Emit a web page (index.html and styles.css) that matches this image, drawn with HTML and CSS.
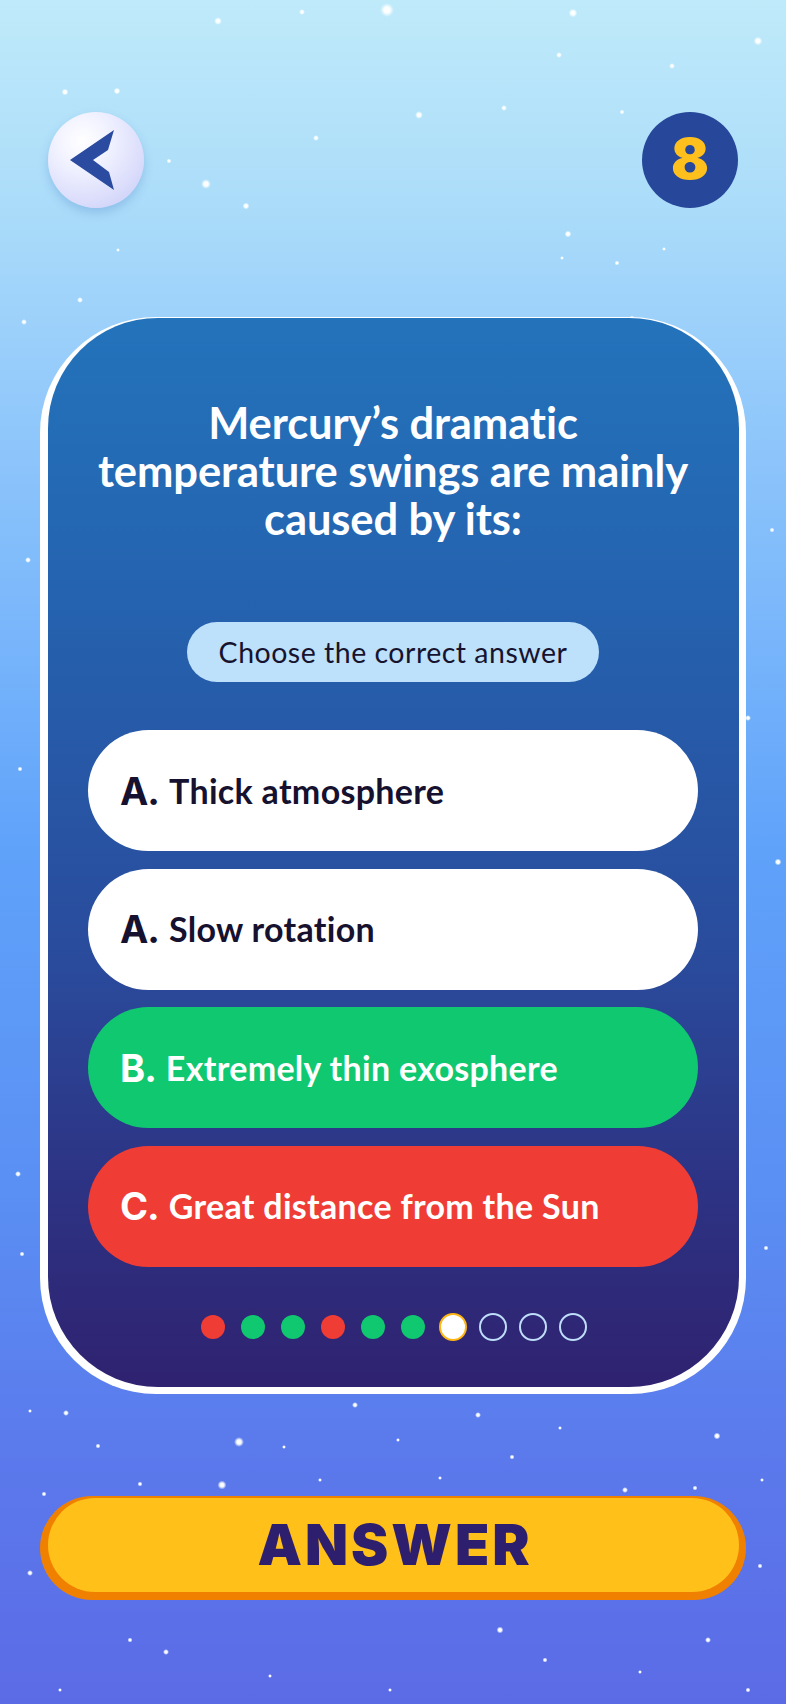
FILE: index.html
```html
<!DOCTYPE html>
<html lang="en">
<head>
<meta charset="utf-8">
<title>Quiz</title>
<link rel="stylesheet" href="styles.css">
</head>
<body>
<div class="page">
  <svg class="stars" width="786" height="1704" viewBox="0 0 786 1704" aria-hidden="true">
    <defs>
      <radialGradient id="glow">
        <stop offset="0" stop-color="#ffffff" stop-opacity="1"/>
        <stop offset="0.45" stop-color="#ffffff" stop-opacity="0.95"/>
        <stop offset="1" stop-color="#e8fbff" stop-opacity="0"/>
      </radialGradient>
    </defs>
    <g fill="url(#glow)">
      <circle cx="387" cy="10" r="7"/>
      <circle cx="218" cy="21" r="4"/>
      <circle cx="302" cy="12" r="3"/>
      <circle cx="573" cy="13" r="4.5"/>
      <circle cx="758" cy="41" r="4.5"/>
      <circle cx="419" cy="115" r="4"/>
      <circle cx="316" cy="138" r="3"/>
      <circle cx="117" cy="91" r="3.5"/>
      <circle cx="65" cy="92" r="3.5"/>
      <circle cx="504" cy="108" r="3"/>
      <circle cx="559" cy="55" r="3"/>
      <circle cx="622" cy="112" r="2.5"/>
      <circle cx="672" cy="66" r="3"/>
      <circle cx="206" cy="184" r="5"/>
      <circle cx="246" cy="206" r="3.5"/>
      <circle cx="169" cy="161" r="2.5"/>
      <circle cx="118" cy="250" r="2"/>
      <circle cx="568" cy="234" r="3.5"/>
      <circle cx="562" cy="258" r="2"/>
      <circle cx="617" cy="263" r="2.5"/>
      <circle cx="664" cy="249" r="2"/>
      <circle cx="697" cy="190" r="2.5"/>
      <circle cx="24" cy="322" r="3"/>
      <circle cx="80" cy="300" r="3"/>
      <circle cx="632" cy="318" r="2.5"/>
      <circle cx="28" cy="560" r="3"/>
      <circle cx="20" cy="769" r="2.5"/>
      <circle cx="748" cy="718" r="3"/>
      <circle cx="778" cy="862" r="3.5"/>
      <circle cx="772" cy="530" r="2.5"/>
      <circle cx="18" cy="1174" r="3"/>
      <circle cx="22" cy="1254" r="2.5"/>
      <circle cx="766" cy="1248" r="2.5"/>
      <circle cx="30" cy="1411" r="2"/>
      <circle cx="66" cy="1413" r="3"/>
      <circle cx="98" cy="1446" r="2.5"/>
      <circle cx="239" cy="1442" r="5"/>
      <circle cx="222" cy="1485" r="4.5"/>
      <circle cx="355" cy="1405" r="3"/>
      <circle cx="284" cy="1447" r="2"/>
      <circle cx="398" cy="1440" r="2"/>
      <circle cx="478" cy="1415" r="3"/>
      <circle cx="512" cy="1457" r="2.5"/>
      <circle cx="560" cy="1428" r="2"/>
      <circle cx="625" cy="1490" r="3"/>
      <circle cx="717" cy="1436" r="3.5"/>
      <circle cx="695" cy="1488" r="2.5"/>
      <circle cx="762" cy="1480" r="2"/>
      <circle cx="44" cy="1494" r="2.5"/>
      <circle cx="140" cy="1484" r="2.5"/>
      <circle cx="320" cy="1480" r="2"/>
      <circle cx="440" cy="1478" r="2"/>
      <circle cx="760" cy="1566" r="2.5"/>
      <circle cx="30" cy="1573" r="3"/>
      <circle cx="130" cy="1640" r="2.5"/>
      <circle cx="166" cy="1652" r="3"/>
      <circle cx="270" cy="1676" r="2"/>
      <circle cx="390" cy="1690" r="2"/>
      <circle cx="500" cy="1630" r="3.5"/>
      <circle cx="545" cy="1660" r="2.5"/>
      <circle cx="640" cy="1672" r="2"/>
      <circle cx="708" cy="1640" r="3"/>
      <circle cx="748" cy="1690" r="2.5"/>
      <circle cx="60" cy="1690" r="2"/>
    </g>
  </svg>

  <div class="screen">
    <header class="topbar">
      <button class="back-btn" aria-label="Back">
        <svg width="96" height="96" viewBox="0 0 96 96">
          <path d="M66 18 L60 38 L45 48 L61 60 L66 78 L22 48 Z" fill="#2a4b9f"/>
        </svg>
      </button>
      <div class="count-badge">8</div>
    </header>

    <div class="card-shell">
      <section class="card">
        <h1 class="question">Mercury’s dramatic<br>temperature swings are mainly<br>caused by its:</h1>
        <div class="hint-row"><span class="hint">Choose the correct answer</span></div>
        <ul class="options">
          <li class="option option-white"><span class="opt-letter">A.</span><span class="opt-text">Thick atmosphere</span></li>
          <li class="option option-white"><span class="opt-letter">A.</span><span class="opt-text">Slow rotation</span></li>
          <li class="option option-green"><span class="opt-letter">B.</span><span class="opt-text">Extremely thin exosphere</span></li>
          <li class="option option-red"><span class="opt-letter">C.</span><span class="opt-text">Great distance from the Sun</span></li>
        </ul>
        <div class="progress">
          <span class="slot"><span class="dot dot-red"></span></span>
          <span class="slot"><span class="dot dot-green"></span></span>
          <span class="slot"><span class="dot dot-green"></span></span>
          <span class="slot"><span class="dot dot-red"></span></span>
          <span class="slot"><span class="dot dot-green"></span></span>
          <span class="slot"><span class="dot dot-green"></span></span>
          <span class="slot"><span class="dot dot-current"></span></span>
          <span class="slot"><span class="dot dot-empty"></span></span>
          <span class="slot"><span class="dot dot-empty"></span></span>
          <span class="slot"><span class="dot dot-empty"></span></span>
        </div>
      </section>
    </div>

    <div class="answer-shell">
      <button class="answer-btn">ANSWER</button>
    </div>
  </div>
</div>
</body>
</html>
```

FILE: styles.css
```css
* { box-sizing: border-box; }

html, body {
  margin: 0;
  padding: 0;
}

body {
  width: 786px;
  height: 1704px;
  overflow: hidden;
  font-family: "Lato", "Noto Sans", sans-serif;
}

.page {
  position: relative;
  width: 786px;
  height: 1704px;
  overflow: hidden;
  background: linear-gradient(180deg,
    #bfeafa 0%,
    #abdcf9 12%,
    #96ccfb 22%,
    #5fa2fa 50%,
    #5a8ff3 70%,
    #5b7aec 85%,
    #5b6be6 100%);
}

.stars {
  position: absolute;
  left: 0;
  top: 0;
}

.screen {
  position: relative;
  display: flex;
  flex-direction: column;
  padding: 112px 40px 0 40px;
}

.topbar {
  display: flex;
  justify-content: space-between;
  align-items: center;
  padding: 0 8px;
}

.back-btn {
  width: 96px;
  height: 96px;
  padding: 0;
  border: none;
  border-radius: 50%;
  background: radial-gradient(circle at 36% 30%, #ffffff 0%, #f1f2ff 30%, #d9dbfb 70%, #c5c6f6 100%);
  box-shadow: 0 5px 10px rgba(60, 110, 190, 0.25);
  display: flex;
  align-items: center;
  justify-content: center;
}

.back-btn svg { display: block; }

.count-badge {
  width: 96px;
  height: 96px;
  border-radius: 50%;
  background: #27479b;
  color: #ffc01e;
  font-family: "Inter", "Lato", sans-serif;
  font-weight: 900;
  font-size: 56px;
  display: flex;
  align-items: center;
  justify-content: center;
  line-height: 1;
  padding-bottom: 2px;
}

.card-shell {
  margin-top: 109px;
  background: #ffffff;
  border-radius: 116px;
  padding: 1px 7px 7px 8px;
}

.card {
  height: 1069px;
  border-radius: 110px;
  background: linear-gradient(180deg, #2373bb 0%, #2560ad 30%, #2a4b9c 60%, #2d3485 80%, #2f2270 100%);
  padding: 80px 41px 0 40px;
  display: flex;
  flex-direction: column;
}

.question {
  margin: 0;
  color: #ffffff;
  font-family: "Lato", sans-serif;
  font-weight: 700;
  font-size: 43.5px;
  line-height: 48px;
  letter-spacing: -0.1px;
  text-align: center;
  white-space: nowrap;
}

.hint-row {
  display: flex;
  justify-content: center;
  margin-top: 80px;
}

.hint {
  display: inline-flex;
  align-items: center;
  height: 60px;
  padding: 0 32px;
  border-radius: 30px;
  background: #bde0fb;
  color: #17132f;
  font-family: "Lato", sans-serif;
  font-size: 28.5px;
  font-weight: 400;
  letter-spacing: 0.5px;
}

.options {
  list-style: none;
  margin: 48px 0 0 0;
  padding: 0;
  display: flex;
  flex-direction: column;
  gap: 17.5px;
}

.option {
  height: 121px;
  border-radius: 61px;
  display: flex;
  align-items: center;
  padding-left: 32px;
  gap: 10px;
}

.opt-letter {
  font-family: "Inter", "Lato", sans-serif;
  font-weight: 700;
  font-size: 38px;
  line-height: 1;
  letter-spacing: -1px;
}

.opt-text {
  font-family: "Lato", sans-serif;
  font-weight: 700;
  font-size: 34px;
  line-height: 1;
  letter-spacing: 0.3px;
}

.option-white { background: #ffffff; color: #15112e; }
.option-green { background: #10c86f; color: #ffffff; }
.option-red { background: #ef3d35; color: #ffffff; }

.progress {
  margin-top: 47px;
  display: flex;
  justify-content: center;
  height: 27px;
  align-items: center;
}

.slot {
  width: 40px;
  display: flex;
  justify-content: center;
  align-items: center;
}

.dot {
  display: block;
  border-radius: 50%;
}

.dot-red { width: 24px; height: 24px; background: #ef3d35; }
.dot-green { width: 24px; height: 24px; background: #10c86f; }
.dot-current { width: 28px; height: 28px; background: #ffffff; border: 2.5px solid #ffb512; }
.dot-empty { width: 28px; height: 28px; border: 2.5px solid #bfdcf8; background: transparent; }

.answer-shell {
  margin-top: 102px;
  background: #f08000;
  border-radius: 54px;
  padding: 2px 7px 8px 8px;
}

.answer-btn {
  display: flex;
  align-items: center;
  justify-content: center;
  width: 100%;
  height: 94px;
  border: none;
  border-radius: 48px;
  background: #ffc01a;
  color: #2e1f6e;
  font-family: "Inter", "Lato", sans-serif;
  font-weight: 900;
  font-size: 56px;
  letter-spacing: 3px;
  padding: 0 0 0 3px;
}
```
